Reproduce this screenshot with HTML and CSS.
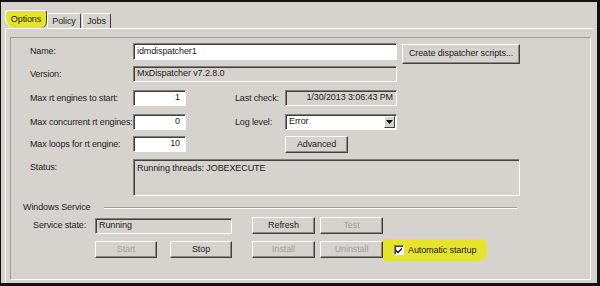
FILE: index.html
```html
<!DOCTYPE html>
<html>
<head>
    <title>Dispatcher properties</title>
    <link rel="stylesheet" href="styles.css">
</head>
<body>
    <div class="window">
        <div class="tabs">
            <div class="tab active">Options</div>
            <div class="tab policy">Policy</div>
            <div class="tab jobs">Jobs</div>
        </div>

        <div class="panel">
            <div class="page">
                <!-- dispatcher settings -->
                <div class="form">
                    <div class="label">Name:</div>
                    <div class="field edit wide">idmdispatcher1</div>
                    <div class="btn create">Create dispatcher scripts...</div>

                    <div class="label">Version:</div>
                    <div class="field ro wide">MxDispatcher v7.2.8.0</div>

                    <div class="label">Max rt engines to start:</div>
                    <div class="field edit num">1</div>
                    <div class="label side">Last check:</div>
                    <div class="field ro date">1/30/2013 3:06:43 PM</div>

                    <div class="label">Max concurrent rt engines:</div>
                    <div class="field edit num">0</div>
                    <div class="label side">Log level:</div>
                    <div class="field edit combo">
                        <span>Error</span>
                        <span class="drop"><svg width="7" height="4" viewBox="0 0 7 4"><path d="M0 0h7L3.5 4z" fill="#111"/></svg></span>
                    </div>

                    <div class="label">Max loops for rt engine:</div>
                    <div class="field edit num">10</div>
                    <div class="btn advanced">Advanced</div>

                    <div class="label">Status:</div>
                    <div class="field ro status">Running threads: JOBEXECUTE</div>
                </div>

                <!-- windows service -->
                <div class="service-head">
                    <span>Windows Service</span>
                    <div class="rule"></div>
                </div>
                <div class="service">
                    <div class="label">Service state:</div>
                    <div class="field ro state">Running</div>
                    <div class="btn c4">Refresh</div>
                    <div class="btn c6 off">Test</div>

                    <div class="pair">
                        <div class="btn off">Start</div>
                        <div class="btn">Stop</div>
                    </div>
                    <div class="btn c4 off">Install</div>
                    <div class="btn c6 off">Uninstall</div>
                    <label class="auto">
                        <span class="check"><svg width="8" height="8" viewBox="0 0 8 8"><path d="M1 3.5l2 2L7 1.5v2L3 7.5l-2-2z" fill="#111"/></svg></span>
                        Automatic startup
                    </label>
                </div>
            </div>
        </div>
    </div>
</body>
</html>
```

FILE: styles.css
```css
body {
    margin: 0;
    font-family: "Liberation Sans", Arial, sans-serif;
    font-size: 9px;
    letter-spacing: -0.1px;
    color: #1c1c1c;
}

/* window frame */
.window {
    width: 600px;
    height: 286px;
    box-sizing: border-box;
    border-style: solid;
    border-color: #111;
    border-width: 2px 3px 3px 1px;
    background: #d6d3ce;
    padding: 8px 3px 0 4px;
    display: flex;
    flex-direction: column;
}

/* tabs */
.tabs {
    display: flex;
    align-items: flex-end;
    height: 18px;
}
.tab {
    height: 15px;
    line-height: 15px;
    box-sizing: border-box;
    text-align: center;
    border-top: 1px solid #fff;
    border-left: 1px solid #fff;
    border-right: 1px solid #404040;
    border-radius: 2px 2px 0 0;
}
.tab.active {
    width: 42px;
    height: 18px;
    line-height: 16px;
    background: #e6e42a;
    border-radius: 3px 3px 6px 10px;
}
.tab.policy { width: 34px; }
.tab.jobs { width: 29px; margin-left: 1px; }

.panel {
    flex: 1;
    display: flex;
    border-top: 1px solid #fff;
    border-left: 1px solid #fff;
    padding: 8px 3px 3px 4px;
}
.page {
    flex: 1;
    border: 1px solid;
    border-color: #a09d98 #fbfaf7 #fbfaf7 #a09d98;
}

/* grid of settings */
.form {
    display: grid;
    grid-template-columns: 103px 53px 99px 112px 5px 118px;
    grid-template-rows: 23px 24px 24px 22px 23px 37px;
    margin: 5px 0 0 19px;
    align-items: start;
}
.label {
    line-height: 16px;
    white-space: nowrap;
}
.form .label { grid-column: 1; letter-spacing: -0.15px; }
.form .label.side { grid-column: 3; padding-left: 49px; }

.field {
    box-sizing: border-box;
    height: 16px;
    line-height: 13px;
    padding: 0 3px;
    border: 1px solid;
    border-color: #7f7d78 #fff #fff #7f7d78;
    box-shadow: inset 1px 1px #404040;
    white-space: nowrap;
}
.field.edit { background: #fff; }
.field.ro { background: #d6d3ce; }
.field.wide { grid-column: 2 / 5; }
.field.wide.edit { height: 17px; line-height: 14px; }
.field.num {
    grid-column: 2;
    text-align: right;
    padding-right: 5px;
}
.field.date { grid-column: 4; text-align: right; }
.field.combo {
    grid-column: 4;
    display: flex;
    justify-content: space-between;
    padding-right: 1px;
}
.drop {
    width: 11px;
    height: 12px;
    margin-top: 1px;
    box-sizing: border-box;
    background: #d6d3ce;
    border: 1px solid;
    border-color: #fff #404040 #404040 #fff;
    display: flex;
    align-items: center;
    justify-content: center;
}
.field.status {
    grid-column: 2 / 7;
    height: 37px;
    padding-top: 2px;
}

/* buttons */
.btn {
    box-sizing: border-box;
    height: 17px;
    line-height: 14px;
    text-align: center;
    background: #d6d3ce;
    border: 1px solid;
    border-color: #fff #404040 #404040 #fff;
    box-shadow: inset -1px -1px #8c8a85;
    white-space: nowrap;
}
.btn.off { color: #a4a29d; }
.btn.create {
    grid-column: 6;
    height: 20px;
    margin-top: 1px;
    line-height: 17px;
}
.btn.advanced { grid-column: 4; width: 63px; }

/* windows service */
.service-head {
    display: flex;
    align-items: center;
    width: 494px;
    margin: 6px 0 0 12px;
    line-height: 11px;
}
.rule {
    flex: 1;
    margin-left: 13px;
    border-top: 1px solid #a09d98;
    border-bottom: 1px solid #fff;
}

.service {
    display: grid;
    grid-template-columns: 62px 137px 20px 63px 5px 63px 110px;
    grid-template-rows: 17px 17px;
    row-gap: 7px;
    margin: 4px 0 0 22px;
}
.service .label { line-height: 17px; }
.field.state { height: 16px; margin-top: 1px; }
.c4 { grid-column: 4; }
.c6 { grid-column: 6; }
.pair {
    grid-column: 2;
    display: flex;
    justify-content: space-between;
}
.pair .btn { width: 62px; }

.auto {
    grid-column: 7;
    width: 104px;
    height: 22px;
    margin-top: -2px;
    box-sizing: border-box;
    padding-left: 11px;
    display: flex;
    align-items: center;
    gap: 4px;
    background: #e6e42a;
    border-radius: 2px 6px 8px 3px;
}
.check {
    width: 10px;
    height: 10px;
    box-sizing: border-box;
    background: #fff;
    border: 1px solid;
    border-color: #7f7d78 #fff #fff #7f7d78;
    box-shadow: inset 1px 1px #404040;
    display: flex;
    align-items: center;
    justify-content: center;
}
```
